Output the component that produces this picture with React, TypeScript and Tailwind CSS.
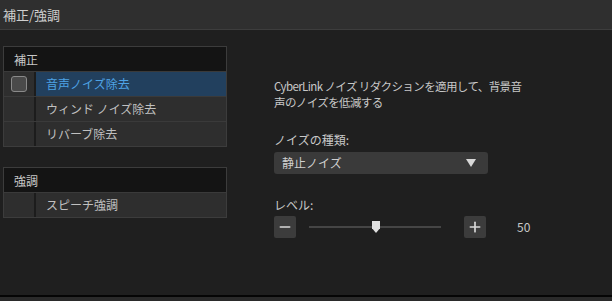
import { Minus, Plus } from "lucide-react";

const font = { fontFamily: '"Noto Sans CJK JP", "Noto Sans", sans-serif' };

function Group({ title, items, selected }: { title: string; items: string[]; selected?: number }) {
  return (
    <div className="w-[224px] border border-[#3c3c3c] bg-[#2b2b2b]">
      <div className="h-[25px] bg-[#141414] pl-[10px] text-[12px] leading-[25px] text-[#c8c8c8] border-b border-[#3a3a3a]">{title}</div>
      {items.map((it, i) => (
        <div key={it} className="flex h-[25px] border-b border-[#3a3a3a] last:border-b-0 last:h-[24px]">
          <div className="w-[32px] flex items-center justify-center border-r-2 border-[#1c1c1c] bg-[#2e2e2e]">
            {i === selected && <div className="w-[16px] h-[16px] rounded-[3px] border border-[#8a8a8a] bg-[#4a4a4a]" />}
          </div>
          <div
            className={
              "flex-1 pl-[10px] text-[12px] leading-[24px] " +
              (i === selected ? "bg-[#22405e] text-[#4ea3e6]" : "bg-[#2e2e2e] text-[#c0c0c0]")
            }
          >
            {it}
          </div>
        </div>
      ))}
    </div>
  );
}

export default function App() {
  return (
    <div className="w-[612px] h-[301px] flex flex-col bg-[#1f1f1f] overflow-hidden" style={font}>
      <div className="h-[30px] shrink-0 bg-[#2f2f2f] border-b border-[#3d3d3d] pl-[3px] text-[13px] leading-[29px] text-[#cfcfcf]">
        補正/強調
      </div>
      <div className="flex-1 flex">
        <div className="pl-[3px] pt-[16px] flex flex-col gap-[20px]">
          <Group title="補正" items={["音声ノイズ除去", "ウィンド ノイズ除去", "リバーブ除去"]} selected={0} />
          <Group title="強調" items={["スピーチ強調"]} />
        </div>
        <div className="ml-[47px] pt-[48px] text-[12px] text-[#c8c8c8]">
          <p className="whitespace-nowrap text-[11.5px] leading-[16px] tracking-[-0.6px]">
            CyberLink ノイズ リダクションを適用して、背景音
            <br />
            声のノイズを低減する
          </p>
          <p className="mt-[22px] leading-[15px]">ノイズの種類:</p>
          <div className="mt-[5px] w-[214px] h-[22px] rounded-[3px] bg-[#3a3a3a] flex items-center justify-between pl-[8px] pr-[12px] text-[#d0d0d0]">
            <span>静止ノイズ</span>
            <span className="w-0 h-0 border-l-[5px] border-r-[5px] border-t-[8px] border-l-transparent border-r-transparent border-t-[#d8d8d8]" />
          </div>
          <p className="mt-[23px] leading-[15px]">レベル:</p>
          <div className="mt-[4px] flex items-center">
            <div className="w-[22px] h-[22px] rounded-[2px] bg-[#3c3c3c] flex items-center justify-center">
              <Minus size={16} strokeWidth={2.5} color="#d8d8d8" />
            </div>
            <div className="ml-[13px] w-[132px] h-[12px] flex items-center relative">
              <div className="w-full h-[2px] bg-[#454545]" />
              <div className="absolute left-[63px] top-0 w-[8px] h-[12px] bg-[#e0e0e0] [clip-path:polygon(0_0,100%_0,100%_60%,50%_100%,0_60%)]" />
            </div>
            <div className="ml-[23px] w-[22px] h-[22px] rounded-[2px] bg-[#3c3c3c] flex items-center justify-center">
              <Plus size={16} strokeWidth={2.5} color="#d8d8d8" />
            </div>
            <span className="ml-[31px] text-[#c8c8c8]">50</span>
          </div>
        </div>
      </div>
      <div className="h-[6px] shrink-0 border-t-2 border-[#050505] bg-[#2a2a2a]" />
    </div>
  );
}
